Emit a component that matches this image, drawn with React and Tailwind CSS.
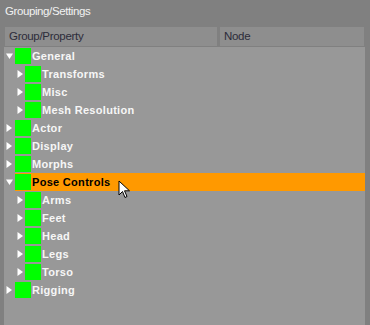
import React from 'react';

const rows = [
  { label: 'General', level: 0, open: true },
  { label: 'Transforms', level: 1 },
  { label: 'Misc', level: 1 },
  { label: 'Mesh Resolution', level: 1 },
  { label: 'Actor', level: 0 },
  { label: 'Display', level: 0 },
  { label: 'Morphs', level: 0 },
  { label: 'Pose Controls', level: 0, open: true, selected: true },
  { label: 'Arms', level: 1 },
  { label: 'Feet', level: 1 },
  { label: 'Head', level: 1 },
  { label: 'Legs', level: 1 },
  { label: 'Torso', level: 1 },
  { label: 'Rigging', level: 0 },
];

const Arrow = ({ open }) =>
  open ? (
    <svg width="7" height="6" viewBox="0 0 7 6">
      <path d="M0 0.5 L7 0.5 L3.5 6 Z" fill="#ffffff" />
    </svg>
  ) : (
    <svg width="6" height="8" viewBox="0 0 6 8">
      <path d="M0.5 0 L6 4 L0.5 8 Z" fill="#ffffff" />
    </svg>
  );

const TreeRow = ({ row }) => (
  <div className="flex h-[18px]">
    <div
      className={`flex items-center shrink-0 ${
        row.level === 0 ? 'w-[11px] pl-[2px]' : 'w-[21px] pl-[13px]'
      }`}
    >
      <Arrow open={row.open} />
    </div>
    <div className={`flex flex-1 items-center ${row.selected ? 'bg-[#ff9900]' : ''}`}>
      <div className="w-[16px] h-[16px] bg-[#00ff00] shrink-0" />
      <span
        className={`ml-[1px] text-[11px] font-bold leading-none tracking-[0.3px] ${
          row.selected ? 'text-black' : 'text-[#f6f6f6]'
        }`}
      >
        {row.label}
      </span>
    </div>
  </div>
);

export default function App() {
  return (
    <div
      className="relative w-[370px] h-[325px] bg-[#808080] flex flex-col overflow-hidden"
      style={{ fontFamily: '"Liberation Sans", Arial, sans-serif' }}
    >
      {/* title */}
      <div className="h-[24px] pl-[5px] flex items-center text-[11.5px] text-[#f2f2f2] tracking-[-0.4px]">
        Grouping/Settings
      </div>

      {/* column headers */}
      <div className="mt-[3px] flex h-[19px] pl-[5px] pr-[6px] gap-[3px]">
        <div className="w-[212px] bg-[#8e8e8e] flex items-center pl-[4px] text-[11.5px] text-[#2c2c3a] tracking-[-0.3px]">
          Group/Property
        </div>
        <div className="flex-1 bg-[#8e8e8e] flex items-center pl-[4px] text-[11.5px] text-[#2c2c3a] tracking-[-0.3px]">
          Node
        </div>
      </div>

      {/* tree */}
      <div className="mt-[1px] ml-[4px] mr-[5px] flex-1 bg-[#989898] flex flex-col">
        {rows.map((r) => (
          <TreeRow key={r.label} row={r} />
        ))}
      </div>

      {/* mouse cursor */}
      <svg
        className="absolute left-[118px] top-[180px]"
        width="13"
        height="20"
        viewBox="0 0 13 20"
      >
        <path
          d="M1 1 L1 15 L4.5 11.5 L7 17.5 L9 16.5 L6.5 10.8 L11.5 10.8 Z"
          fill="#ffffff"
          stroke="#000000"
          strokeWidth="1"
          strokeLinejoin="miter"
        />
      </svg>
    </div>
  );
}
